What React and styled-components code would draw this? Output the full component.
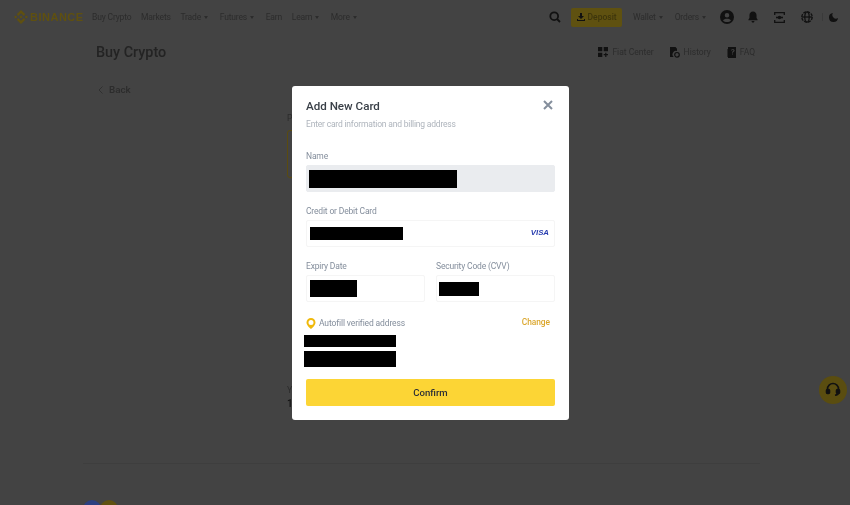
import React from "react";
import styled, { createGlobalStyle } from "styled-components";

const Global = createGlobalStyle`
  html, body { margin: 0; padding: 0; background: #434343; }
  #root { width: 850px; height: 505px; overflow: hidden; }
  * { box-sizing: border-box; }
`;
const Page = styled.div`
  position: relative; width: 850px; height: 505px; overflow: hidden; background: #434343;
  font-family: Roboto, "Liberation Sans", sans-serif; color: #2a2a2a; filter: blur(0.35px);
`;
const Nav = styled.header`
  height: 34px; padding: 0 11px 0 14px; display: flex; align-items: center;
`;
const Logo = styled.div`
  display: flex; align-items: center; gap: 2px; width: 78px; color: #5f5010;
  font-family: "Liberation Sans", sans-serif; font-weight: 700; font-size: 11px; letter-spacing: 0.5px;
`;
const NavGroup = styled.nav`
  display: flex; align-items: center; gap: 9.6px;
`;
const NavItem = styled.span`
  display: flex; align-items: center; gap: 3px; font-size: 8.5px; letter-spacing: -0.15px; color: #2c2c2c; white-space: nowrap;
  margin-right: ${(p) => (p.$caret ? 2 : 0)}px;
  &::after {
    content: ""; display: ${(p) => (p.$caret ? "block" : "none")};
    border: 2.2px solid transparent; border-top: 3px solid #2c2c2c; border-bottom: 0;
  }
`;
const AccountGroup = styled(NavGroup)`
  gap: 12px;
  ${NavItem} { margin-right: 0; }
`;
const Spacer = styled.div` flex: 1; `;
const NavRight = styled.div` display: flex; align-items: center; `;
const Deposit = styled.button`
  display: flex; align-items: center; justify-content: center; gap: 3px; width: 51px; height: 19px; margin: 0 11px 0 10px;
  padding: 0; border: 0; border-radius: 2px; background: #5f5110; color: #3d350c; font: 500 8.5px Roboto, sans-serif;
`;
const IconSlot = styled.span`
  display: flex; align-items: center; justify-content: center; width: ${(p) => p.$w}px; color: #111;
`;
const Divider = styled.span` width: 1px; height: 8px; background: #3a3a3a; margin: 0 4px 0 8px; `;
const HeaderRow = styled.div`
  display: flex; align-items: center; justify-content: space-between; height: 36px; padding: 0 95px 0 96px;
`;
const PageTitle = styled.h1` margin: 0; font-size: 14.4px; font-weight: 500; color: #232323; `;
const Links = styled.div` display: flex; align-items: center; gap: 16px; `;
const LinkItem = styled.span` display: flex; align-items: center; gap: 4px; font-size: 8.5px; color: #2c2c2c; `;
const Back = styled.div`
  display: flex; align-items: center; gap: 6px; margin: 14px 0 0 98px; font-size: 9.8px; font-weight: 500; color: #2c2c2c;
`;
const Under = styled.section` margin: 18px 0 0 287px; width: 276px; `;
const UnderLabel = styled.div` font-size: 8.7px; color: #2c2c2c; `;
const UnderCard = styled.div` margin-top: 7px; height: 48px; border: 1px solid #5a4b10; border-radius: 3px; `;
const UnderValue = styled.div` margin-top: 3px; font-size: 10px; font-weight: 600; color: #151515; `;
const UnderFooter = styled.div` margin: 207px 0 0 0; `;
const Foot = styled.footer`
  position: absolute; left: 83px; right: 90px; top: 463px; border-top: 1px solid #3e3e3e; padding-top: 36px; display: flex;
`;
const Coin = styled.span`
  width: 18px; height: 18px; border-radius: 50%; margin-right: -1px; background: ${(p) => p.$c};
`;
const Help = styled.div`
  position: absolute; left: 819px; top: 376px; width: 28px; height: 28px; border-radius: 50%; background: #5a4d10;
  display: flex; align-items: center; justify-content: center;
`;
const Overlay = styled.div`
  position: absolute; inset: 0; display: flex; justify-content: center; align-items: flex-start; padding: 86px 0 0 11px;
`;
const Modal = styled.div`
  width: 277px; height: 334px; background: #fff; border-radius: 3px; padding: 12px 14px 14px; display: flex; flex-direction: column;
`;
const ModalHead = styled.div` display: flex; align-items: center; justify-content: space-between; height: 15px; `;
const ModalTitle = styled.h2` margin: 0; font-size: 11.6px; font-weight: 500; color: #3a4048; `;
const Close = styled.span` display: flex; margin: -2px 2px 0 0; color: #848e9c; `;
const Sub = styled.p` margin: 5px 0 0; font-size: 8.5px; letter-spacing: -0.19px; line-height: 12px; color: #aeb4bc; `;
const Label = styled.label` display: block; font-size: 8.5px; letter-spacing: -0.17px; line-height: 12px; color: #848e9c; `;
const Field = styled.div`
  display: flex; flex-direction: column; gap: 3px; margin-top: ${(p) => p.$mt || 0}px; flex: 1;
`;
const Input = styled.div`
  height: 27px; border-radius: 2px; display: flex; align-items: center; justify-content: space-between;
  padding: 0 5px 0 ${(p) => p.$pl}px; background: ${(p) => (p.$filled ? "#eaecef" : "#fff")};
  border: 1px solid ${(p) => (p.$filled ? "#eaecef" : "#f5f5f5")};
`;
const Redact = styled.span`
  display: block; width: ${(p) => p.$w}px; height: ${(p) => p.$h}px; background: #000;
  margin-top: ${(p) => p.$mt || 0}px; margin-left: ${(p) => p.$ml || 0}px;
`;
const Visa = styled.span`
  font: italic 700 7.8px "Liberation Sans", sans-serif; color: #2a3fb0; margin-top: -3px;
`;
const Row = styled.div` display: flex; gap: 11px; margin-top: 13px; `;
const AddressHead = styled.div` display: flex; align-items: center; justify-content: space-between; margin-top: 14px; height: 14px; padding-right: 5px; `;
const Autofill = styled.span` display: flex; align-items: center; gap: 3px; font-size: 8.5px; letter-spacing: -0.13px; color: #848e9c; `;
const Change = styled.span` font-size: 8.4px; font-weight: 500; letter-spacing: -0.05px; color: #dba72e; margin-top: -2px; `;
const Confirm = styled.button`
  margin-top: 12px; height: 27px; border: 0; border-radius: 2px; background: #fcd535; color: #2b2f36;
  font: 500 9.6px Roboto, sans-serif;
`;

export default function App() {
  return (
    <Page>
      <Global />
      <Nav>
        <Logo>
          <svg width="14" height="14" viewBox="0 0 126.61 126.61" fill="#5f5010">
            <path d="M38.73 53.2l24.59-24.58 24.6 24.6 14.3-14.31L63.32 0 24.43 38.89z" />
            <path d="M0 63.31l14.3-14.31 14.31 14.31-14.31 14.3z" />
            <path d="M38.73 73.41L63.32 98l24.6-24.6 14.31 14.29L63.32 126.61 24.43 87.72z" />
            <path d="M98 63.31l14.3-14.31 14.31 14.3-14.31 14.32z" />
            <path d="M77.83 63.3L63.32 48.78 48.81 63.28l14.51 14.5z" />
          </svg>
          BINANCE
        </Logo>
        <NavGroup>
          <NavItem>Buy Crypto</NavItem>
          <NavItem>Markets</NavItem>
          <NavItem $caret>Trade</NavItem>
          <NavItem $caret>Futures</NavItem>
          <NavItem>Earn</NavItem>
          <NavItem $caret>Learn</NavItem>
          <NavItem $caret>More</NavItem>
        </NavGroup>
        <Spacer />
        <NavRight>
          <IconSlot $w={12}>
            <svg width="12" height="12" viewBox="0 0 12 12" fill="none" stroke="#111" strokeWidth="1.8"><circle cx="5.2" cy="5.2" r="3.9" /><path d="M8 8l3 3" /></svg>
          </IconSlot>
          <Deposit>
            <svg width="8" height="8" viewBox="0 0 8 8" fill="#111"><path d="M3 0h2v3h2L4 6 1 3h2zM0 6h1v1h6V6h1v2H0z" /></svg>
            Deposit
          </Deposit>
          <AccountGroup>
            <NavItem $caret>Wallet</NavItem>
            <NavItem $caret>Orders</NavItem>
          </AccountGroup>
          <IconSlot $w={42}>
            <svg width="14" height="14" viewBox="0 0 14 14" fill="#111"><path fillRule="evenodd" d="M7 0a7 7 0 110 14A7 7 0 017 0zm0 3a2.3 2.3 0 100 4.6A2.3 2.3 0 007 3zM3 10.5c1 1 2.400 1.600 4 1.600s3-.6 4-1.600C10.300 9.300 8.800 8.800 7 8.800s-3.300.5-4 1.700z" /></svg>
          </IconSlot>
          <IconSlot $w={10}>
            <svg width="11" height="12" viewBox="0 0 11 12" fill="#111"><path d="M5.500 0C3 0 1.600 1.900 1.600 4.200V7L.5 8.800v.7h10v-.7L9.400 7V4.200C9.400 1.900 8 0 5.500 0zM3.800 10.400h3.400L6.500 12h-2z" /></svg>
          </IconSlot>
          <IconSlot $w={42}>
            <svg width="11" height="11" viewBox="0 0 11 11" fill="none" stroke="#111" strokeWidth="1.300"><path d="M.7 3V.7h9.600V3M.7 8v2.300h9.600V8" /><path d="M2 5.500h7" strokeWidth="1.600" /><circle cx="5.500" cy="5.500" r="1" fill="#111" /></svg>
          </IconSlot>
          <IconSlot $w={14}>
            <svg width="12" height="12" viewBox="0 0 12 12" fill="none" stroke="#111" strokeWidth="1.300"><circle cx="6" cy="6" r="5.200" strokeDasharray="3 1" /><ellipse cx="6" cy="6" rx="2.200" ry="5.200" /><path d="M.8 6h10.400" /></svg>
          </IconSlot>
          <Divider />
          <IconSlot $w={12}>
            <svg width="9" height="9" viewBox="0 0 9 9" fill="#111"><path d="M4 0a4.500 4.500 0 105 5 3.600 3.600 0 01-5-5z" /></svg>
          </IconSlot>
        </NavRight>
      </Nav>

      <HeaderRow>
        <PageTitle>Buy Crypto</PageTitle>
        <Links>
          <LinkItem>
            <svg width="10" height="10" viewBox="0 0 10 10" fill="#111"><path d="M0 0h4.300v4.300H0zM5.700 0H10v4.300H5.700zM0 5.700h4.300V10H0zM7.200 5.700h1.200v1.400H10v1.200H8.400V10H7.200V8.300H5.700V7.100h1.500z" /></svg>
            Fiat Center
          </LinkItem>
          <LinkItem>
            <svg width="10" height="11" viewBox="0 0 10 11" fill="#111"><path d="M0 0h5.500L7 1.800V4a3.500 3.500 0 00-3.300 6H0z" /><circle cx="7" cy="7.800" r="2.300" fill="none" stroke="#111" strokeWidth="1.200" /></svg>
            History
          </LinkItem>
          <LinkItem>
            <svg width="9" height="11" viewBox="0 0 9 11" fill="#111"><path fillRule="evenodd" d="M1 0h8v11H1V9.500H0v-1h1v-1H0v-1h1v-1H0v-1h1v-1H0v-1h1zm3 3.500h1c0-.6 1.500-.6 1.500.1 0 .6-1.500.8-1.500 2.200h1c0-.9 1.600-1 1.600-2.300C7.600 1.800 4 1.800 4 3.500zM5 6.500v1h1v-1z" /></svg>
            FAQ
          </LinkItem>
        </Links>
      </HeaderRow>

      <Back>
        <svg width="5" height="8" viewBox="0 0 5 8" fill="none" stroke="#2c2c2c" strokeWidth="0.8"><path d="M4.500.5L1 4l3.500 3.500" /></svg>
        Back
      </Back>

      <Under>
        <UnderLabel>P</UnderLabel>
        <UnderCard />
        <UnderFooter>
          <UnderLabel>Y</UnderLabel>
          <UnderValue>1</UnderValue>
        </UnderFooter>
      </Under>

      <Foot>
        <Coin $c="#2c3f80" />
        <Coin $c="#5f5110" />
      </Foot>

      <Help>
        <svg width="16" height="16" viewBox="0 0 16 16" fill="none" stroke="#111" strokeWidth="1.600"><path d="M2.500 9V7a5.500 5.500 0 0111 0v3.500c0 1.500-1.500 2.500-3.500 2.800" /><rect x="1.500" y="7.500" width="3" height="4" rx="1" fill="#111" /><rect x="11.500" y="7.500" width="3" height="4" rx="1" fill="#111" /></svg>
      </Help>

      <Overlay>
        <Modal>
          <ModalHead>
            <ModalTitle>Add New Card</ModalTitle>
            <Close>
              <svg width="10" height="10" viewBox="0 0 10 10" fill="none" stroke="#848e9c" strokeWidth="2"><path d="M1 1l8 8M9 1l-8 8" /></svg>
            </Close>
          </ModalHead>
          <Sub>Enter card information and billing address</Sub>
          <Field $mt={20}>
            <Label>Name</Label>
            <Input $filled $pl={2}><Redact $w={148} $h={18} /></Input>
          </Field>
          <Field $mt={13}>
            <Label>Credit or Debit Card</Label>
            <Input $pl={3}><Redact $w={93} $h={13} /><Visa>VISA</Visa></Input>
          </Field>
          <Row>
            <Field>
              <Label>Expiry Date</Label>
              <Input $pl={3}><Redact $w={47} $h={17} /></Input>
            </Field>
            <Field>
              <Label>Security Code (CVV)</Label>
              <Input $pl={2}><Redact $w={40} $h={14} /></Input>
            </Field>
          </Row>
          <AddressHead>
            <Autofill>
              <svg width="10" height="11" viewBox="0 0 10 11"><path fillRule="evenodd" fill="#f0b90b" d="M5 0a4.500 4.500 0 014.500 4.500C9.500 7.500 5 11 5 11S.5 7.500.5 4.500A4.500 4.500 0 015 0zm0 2a2.500 2.500 0 100 5 2.500 2.500 0 000-5z" /></svg>
              Autofill verified address
            </Autofill>
            <Change>Change</Change>
          </AddressHead>
          <Redact $w={92} $h={12} $mt={5} $ml={-2} />
          <Redact $w={92} $h={16} $mt={4} $ml={-2} />
          <Confirm>Confirm</Confirm>
        </Modal>
      </Overlay>
    </Page>
  );
}
